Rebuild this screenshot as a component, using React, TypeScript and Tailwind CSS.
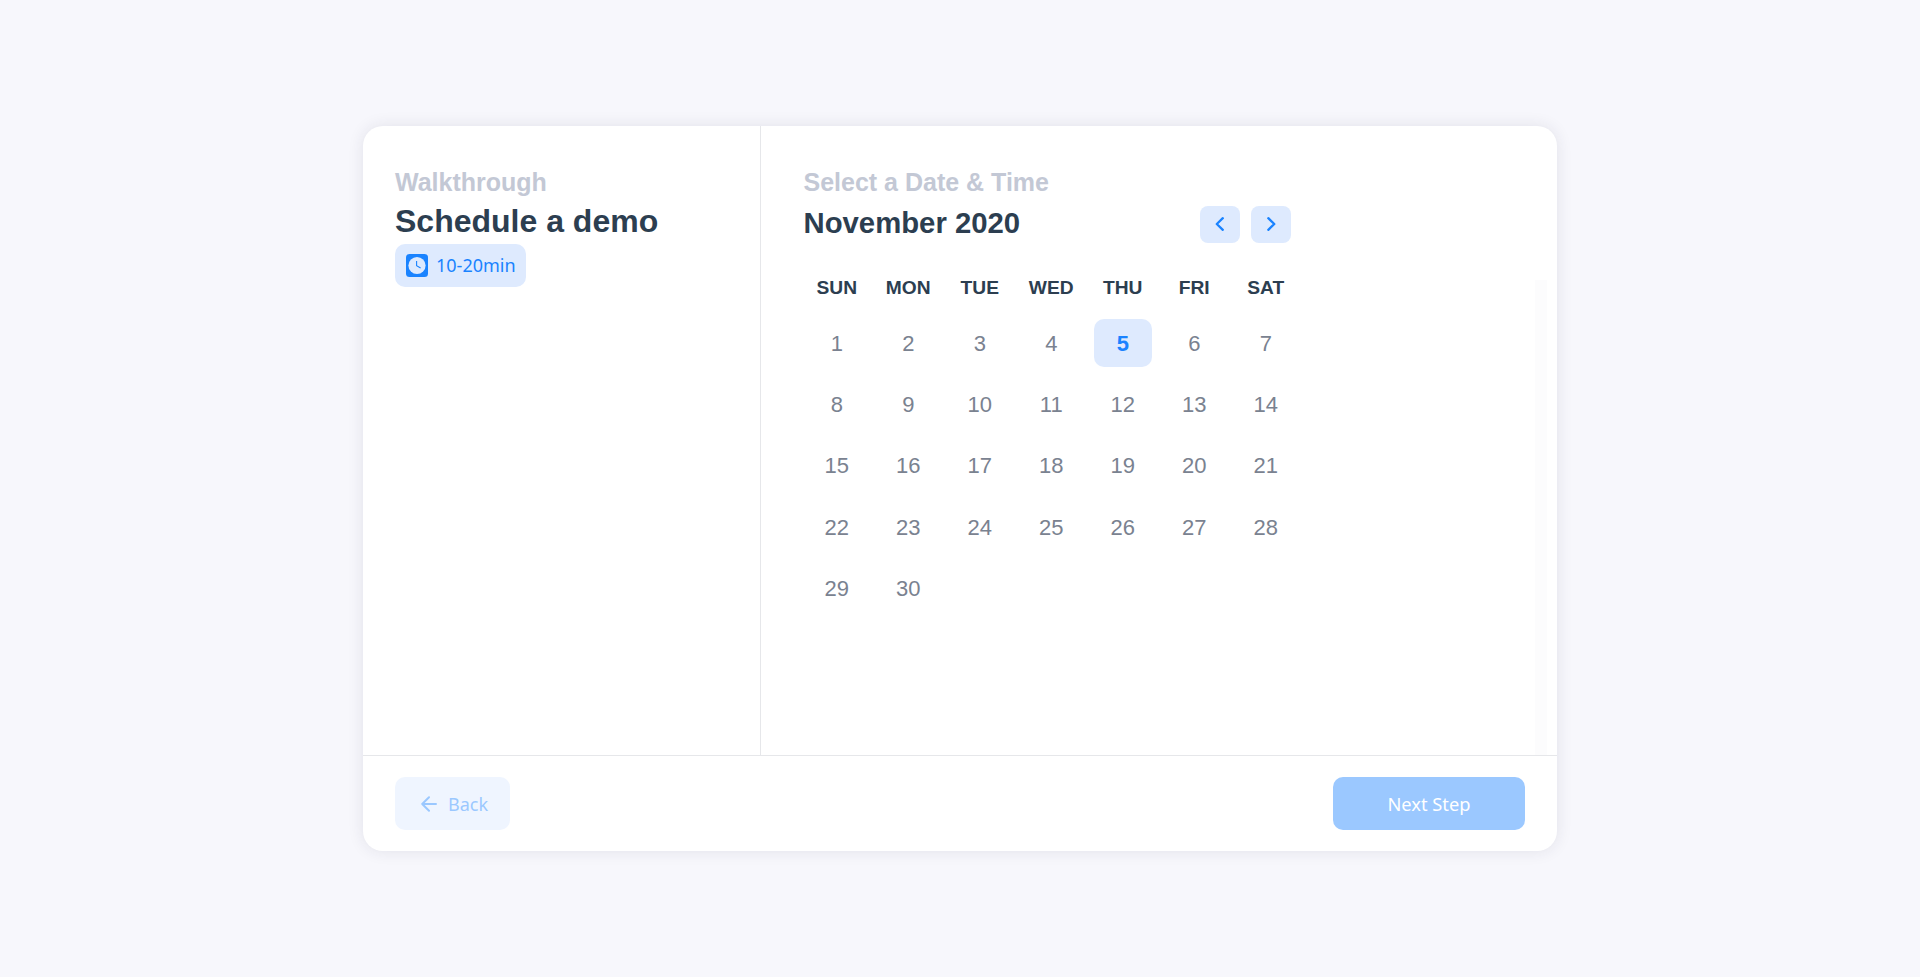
const WEEKDAYS = ["SUN", "MON", "TUE", "WED", "THU", "FRI", "SAT"];
const DAYS = Array.from({ length: 30 }, (_, i) => i + 1);
const SELECTED = 5;

function ClockIcon() {
  return (
    <svg width="22" height="23" viewBox="0 0 22 23" fill="none">
      <rect width="22" height="23" rx="3.5" fill="#1a83ff" />
      <circle cx="11" cy="11.5" r="8.6" fill="#deeafe" />
      <path d="M10.6 7v4.8l4 2.3" stroke="#1a83ff" strokeWidth="1.1" />
    </svg>
  );
}

function Chevron({ direction }: { direction: "left" | "right" }) {
  return (
    <svg width="10" height="14" viewBox="0 0 10 14" fill="none" stroke="#1a83ff" strokeWidth="2.3" strokeLinejoin="round" strokeLinecap="round">
      <path d={direction === "left" ? "M7.8 1.2 1.8 7l6 5.8" : "M2.3 1.2 8.3 7l-6 5.8"} />
    </svg>
  );
}

function BackArrow() {
  return (
    <svg width="16" height="16" viewBox="0 0 16 16" fill="none" stroke="#9bc8ff" strokeWidth="2" strokeLinecap="round" strokeLinejoin="round">
      <path d="M15 8H1.2M8 1.2 1.2 8 8 14.8" />
    </svg>
  );
}

function Sidebar() {
  return (
    <aside className="flex w-[398px] shrink-0 flex-col items-start border-r border-[#e6e7ea] pl-8 pt-[39px]">
      <h2 className="text-[25px] leading-[34px] font-bold text-[#c3c8d5]">Walkthrough</h2>
      <h1 className="mb-px text-[32px] leading-[44px] font-bold text-[#2c3e50]">Schedule a demo</h1>
      <div className="flex h-[43px] w-[131px] items-center gap-2 rounded-[10px] bg-[#deeafe] pl-[11px]">
        <ClockIcon />
        <span className="pb-px font-['Noto_Sans',sans-serif] text-[18px] leading-none whitespace-nowrap text-[#1a83ff]">10-20min</span>
      </div>
    </aside>
  );
}

function Calendar() {
  return (
    <section className="w-[530px] pl-[40px] pt-[39px]">
      <h2 className="pl-[2.5px] text-[25px] leading-[34px] font-bold text-[#c3c8d5]">Select a Date &amp; Time</h2>
      <div className="flex h-[50px] w-[490px] items-center justify-between">
        <h3 className="pb-[2px] pl-[2.5px] text-[29.3px] font-bold text-[#2c3e50]">November 2020</h3>
        <div className="flex gap-[11px]">
          <button className="flex h-[37px] w-10 items-center justify-center rounded-lg bg-[#deeafe]"><Chevron direction="left" /></button>
          <button className="flex h-[37px] w-10 items-center justify-center rounded-lg bg-[#deeafe]"><Chevron direction="right" /></button>
        </div>
      </div>
      <div className="grid w-[500.5px] grid-cols-7 pt-[25px]">
        {WEEKDAYS.map((d) => (
          <div key={d} className="flex h-[28px] items-center justify-center text-[19.2px] font-bold text-[#2c3e50]">{d}</div>
        ))}
      </div>
      <div className="grid w-[500.5px] auto-rows-[61.3px] grid-cols-7 pt-[10.5px]">
        {DAYS.map((d) => (
          <div key={d} className="flex items-center justify-center">
            <button className={d === SELECTED ? "h-12 w-[58px] rounded-[10px] bg-[#deeafe] text-[22px] font-bold text-[#1a83ff]" : "h-12 w-[58px] text-[22px] text-[#7a8290]"}>{d}</button>
          </div>
        ))}
      </div>
    </section>
  );
}

export default function App() {
  return (
    <div className="flex min-h-screen items-center justify-center bg-[#f7f7fc] font-['Liberation_Sans',Arial,sans-serif]">
      <main className="flex h-[725px] w-[1194px] flex-col rounded-[20px] bg-white shadow-[0_0_16px_rgba(40,40,70,0.1)]">
        <div className="flex min-h-0 flex-1">
          <Sidebar />
          <Calendar />
          <div className="mt-[154px] mr-[10px] ml-auto w-3 bg-[#fcfcfd]" />
        </div>
        <footer className="flex h-24 shrink-0 items-center justify-between border-t border-[#e6e7ea] px-8 font-['Noto_Sans',sans-serif] text-[18px]">
          <button className="flex h-[53px] w-[115px] items-center gap-[11px] rounded-[10px] bg-[#eff5ff] pl-[26px] text-[#9bc8ff]">
            <BackArrow />
            <span className="pt-px">Back</span>
          </button>
          <button className="h-[53px] w-48 rounded-[10px] bg-[#9bc8ff] pt-px text-[18.3px] text-white">Next Step</button>
        </footer>
      </main>
    </div>
  );
}
